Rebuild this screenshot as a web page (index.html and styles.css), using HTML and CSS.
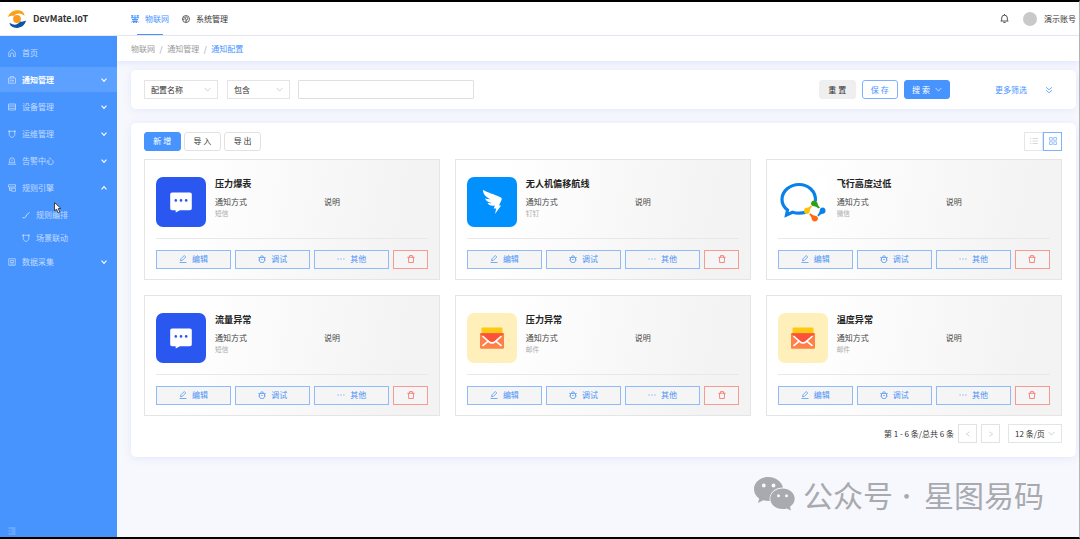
FILE: index.html
```html
<!DOCTYPE html>
<html lang="zh-CN">
<head>
    <meta charset="UTF-8">
    <meta name="viewport" content="width=device-width, initial-scale=1.0">
    <title>DevMate.IoT</title>
    <link rel="stylesheet" href="styles.css">
</head>
<body>
    <!-- icon sprite -->
    <svg class="sprite">
        <symbol id="i-home" viewBox="0 0 16 16"><path d="M1.500 15V6.500L8 1l6.500 5.500V15H11v-4a3 3 0 0 0-6 0v4z"/></symbol>
        <symbol id="i-notice" viewBox="0 0 16 16"><path d="M1 4h14v10.500H1zM5 4V1h6v3M4.500 7v4.500M8 7v4.500M8 9.200h4"/></symbol>
        <symbol id="i-device" viewBox="0 0 16 16"><path d="M1 2h14v12H1zM1 6h14M1 10.500h14"/></symbol>
        <symbol id="i-shield" viewBox="0 0 16 16"><path d="M2.500 2.500h11v7c0 3-3 4.500-5.500 5.500-2.500-1-5.500-2.500-5.500-5.500zM0 2.500h4M12 2.500h4M2.500 1v4M13.500 1v4"/></symbol>
        <symbol id="i-alarm" viewBox="0 0 16 16"><path d="M3 11.500V6.500a5 5 0 0 1 10 0v5M0 14.500h16M1.500 11.500h13M8 5v3M8 9v1"/></symbol>
        <symbol id="i-rule" viewBox="0 0 16 16"><path d="M.8 1.500h14.400v4.500H.8zM3 6v7h4M3 9.500h4M7.500 8.500h7.700v6H7.500z"/></symbol>
        <symbol id="i-flow" viewBox="0 0 16 16"><path stroke-width="2" d="M1 13.500h4c4 0 2-6 7-8M12 5.500L15 3"/></symbol>
        <symbol id="i-data" viewBox="0 0 16 16"><path d="M1.500 1.500h13v13h-13zM5 5h6v4H5zM4.500 12h7"/></symbol>
        <symbol id="i-fold" viewBox="0 0 16 16"><path d="M1 2h14M7 6h8M7 10h8M1 14h14M1 8h4"/></symbol>
        <symbol id="i-down" viewBox="0 0 16 16"><path d="M1.500 4.500L8 11.500l6.500-7"/></symbol>
        <symbol id="i-up" viewBox="0 0 16 16"><path d="M1.500 11.500L8 4.500l6.500 7"/></symbol>
        <symbol id="i-left" viewBox="0 0 16 16"><path d="M12.500 2L3.500 8l9 6"/></symbol>
        <symbol id="i-right" viewBox="0 0 16 16"><path d="M3.500 2l9 6-9 6"/></symbol>
        <symbol id="i-double" viewBox="0 0 16 16"><path d="M2 2.500L8 7.500l6-5M2 8.500l6 5 6-5"/></symbol>
        <symbol id="i-edit" viewBox="0 0 16 16"><path d="M3 11.500l1-4L10.500 1l3 3L7 10.500zM1 15h14"/></symbol>
        <symbol id="i-bug" viewBox="0 0 16 16"><path d="M3 5h10v5.500a5 5 0 0 1-10 0zM5 5a3 3.500 0 0 1 6 0M.5 4.500L3 6.500M15.500 4.500L13 6.500M.5 10H3M13 10h2.500M6.500 9h3"/></symbol>
        <symbol id="i-more" viewBox="0 0 16 16"><path d="M1 8h2.500M6.800 8h2.500M12.500 8H15"/></symbol>
        <symbol id="i-trash" viewBox="0 0 16 16"><path d="M.8 4.500h14.400M2.800 4.500l.5 10.500h9.400l.5-10.500M5 4.500V1.200h6v3.300"/></symbol>
        <symbol id="i-iot" viewBox="0 0 16 16"><path d="M8 0v16M0 1.500h5M11 1.500h5M0 5.500h16M2 9h12M.5 15L5 10.500M15.500 15L11 10.500M2.500 1.500v4M13.500 1.500v4M5 12v4M11 12v4M4 13h8"/></symbol>
        <symbol id="i-system" viewBox="0 0 16 16"><circle cx="8" cy="8" r="7"/><path d="M8 8L3 4M8 8v7M5 8.500H1M6 4.500c3-1.500 5.500 0 5.500 2.500S10 10 8 11"/></symbol>
        <symbol id="i-bell" viewBox="0 0 16 16"><path d="M3 12V7a5 5 0 0 1 10 0v5M1 12.500h14M6 15.300h4M8 0v2"/></symbol>
        <symbol id="i-list" viewBox="0 0 16 16"><path d="M0 3h2.500M5 3h11M0 8h2.500M5 8h11M0 13h2.500M5 13h11"/></symbol>
        <symbol id="i-grid" viewBox="0 0 16 16"><path d="M1 1h5.500v5.500H1zM9.500 1H15v5.500H9.500zM1 9.500h5.500V15H1zM9.500 9.500H15V15H9.500z"/></symbol>

        <symbol id="logo-sms" viewBox="0 0 50 50">
            <rect width="50" height="50" fill="#2957f0"/>
            <path fill="#fff" d="M16 15.500h18a1.800 1.800 0 0 1 1.800 1.800v14.200a1.800 1.800 0 0 1-1.800 1.800H24l-4.300 2.200v-2.200H16a1.800 1.800 0 0 1-1.800-1.800V17.300a1.800 1.800 0 0 1 1.800-1.800z"/>
            <g fill="#2957f0"><circle cx="19.800" cy="23.400" r="1.300"/><circle cx="25" cy="23.400" r="1.300"/><circle cx="30.200" cy="23.400" r="1.300"/></g>
        </symbol>
        <symbol id="logo-ding" viewBox="0 0 50 50">
            <rect width="50" height="50" fill="#0091ff"/>
            <path fill="#fff" d="M16 12.800C20 15.500 27.500 17.500 33.500 20.200c1.300.7 1.500 1.600 1 2.800l-2.500 5.500h2.100L28 37l1.200-5.500h-2.500l1.200-3c-3.400.9-6-.2-7.400-2.400 1.700.2 3.200.2 4.500-.1-3.500-.6-6-2-7-4.500 2.200.6 4 .8 5.500.7-4.500-1.700-7.500-4.900-7.500-9.400z"/>
        </symbol>
        <symbol id="logo-wecom" viewBox="0 0 50 50">
            <rect width="50" height="50" fill="#fff"/>
            <path fill="none" stroke="#0a80e8" stroke-width="3.200" d="M37.500 24C38 14 30 7.500 21 7.500S4 14 4 22.500c0 4.500 2 7.800 5.500 10.500L8.500 38l6-2.800c4 1.200 8.500 1.200 13 .2"/>
            <path fill="#2ba012" d="M33 26.500c.3-4 6-4 6.500-.3.200 2 1.300 3 2.500 4.300l-1.500 1c-1.800-1.700-3-2-4.500-2.200-2-.3-3-1.300-3-2.800z"/>
            <path fill="#0a80e8" d="M44.500 30.500c4 .3 4 6 .3 6.300-2 .2-3 1.300-4.300 2.700l-1.200-1.300c1.700-1.700 2.200-3 2.400-4.700.3-2 1.300-3 2.800-3z"/>
            <path fill="#ff6a10" d="M40 41.500c-.3 4-6 4-6.300.3-.2-2-1.200-3-2.500-4.300l1.300-1.200c1.700 1.700 3 2.200 4.700 2.400 1.800.3 2.800 1.300 2.800 2.800z"/>
            <path fill="#fcc20b" d="M29 37c-4-.3-4-6-.3-6.300 2-.2 3-1.200 4.300-2.500l1.200 1.300c-1.700 1.700-2.200 3-2.400 4.700-.3 1.800-1.300 2.800-2.800 2.800z"/>
        </symbol>
        <symbol id="logo-mail" viewBox="0 0 50 50">
            <rect width="50" height="50" fill="#fff0bb"/>
            <rect x="14.500" y="14.500" width="21" height="8" rx="1" fill="#fdc915"/>
            <rect x="13" y="20.300" width="24" height="15.400" rx="1" fill="#ff8048"/>
            <path fill="#fb523b" d="M13 20.300h24L26.500 30h-3z"/>
            <path fill="none" stroke="#fff" stroke-width="1.600" d="M15.500 23l6 5.300q3.500 3.200 7 0l6-5.300M15.500 32.800l5.500-4.500M34.500 32.800L29 28.300"/>
        </symbol>
    </svg>

    <div class="app">
        <header class="header">
            <div class="brand">
                <svg class="brand-logo" viewBox="0 0 36 36">
                    <path fill="#f9a11b" d="M0 14C3 4 13-1 24 1c5 1 9 5 9 11-6-6-15-7-21 0-4-1-8 0-12 2z"/>
                    <path fill="#0b56a4" d="M36 21c-2 11-13 17-24 14-5-1.500-9-5-9-10 7 6 16 6 21-2 4 1 8 0 12-2z"/>
                    <circle cx="18" cy="18" r="7.800" fill="#fb9a1c"/>
                </svg>
                <span>DevMate.IoT</span>
            </div>
            <nav class="top-nav">
                <a class="top-link active"><svg class="icon"><use href="#i-iot"/></svg>物联网</a>
                <a class="top-link"><svg class="icon"><use href="#i-system"/></svg>系统管理</a>
            </nav>
            <div class="account">
                <svg class="icon bell"><use href="#i-bell"/></svg>
                <span class="avatar"></span>
                <span>演示账号</span>
            </div>
        </header>

        <div class="main">
            <aside class="sidebar">
                <ul class="menu">
                    <li class="menu-item"><svg class="icon"><use href="#i-home"/></svg>首页</li>
                    <li class="menu-item active"><svg class="icon"><use href="#i-notice"/></svg>通知管理<svg class="icon arrow"><use href="#i-down"/></svg></li>
                    <li class="menu-item"><svg class="icon"><use href="#i-device"/></svg>设备管理<svg class="icon arrow"><use href="#i-down"/></svg></li>
                    <li class="menu-item"><svg class="icon"><use href="#i-shield"/></svg>运维管理<svg class="icon arrow"><use href="#i-down"/></svg></li>
                    <li class="menu-item"><svg class="icon"><use href="#i-alarm"/></svg>告警中心<svg class="icon arrow"><use href="#i-down"/></svg></li>
                    <li class="menu-item"><svg class="icon"><use href="#i-rule"/></svg>规则引擎<svg class="icon arrow"><use href="#i-up"/></svg></li>
                    <li class="menu-item sub"><svg class="icon"><use href="#i-flow"/></svg>规则编排</li>
                    <li class="menu-item sub"><svg class="icon"><use href="#i-shield"/></svg>场景联动</li>
                    <li class="menu-item"><svg class="icon"><use href="#i-data"/></svg>数据采集<svg class="icon arrow"><use href="#i-down"/></svg></li>
                </ul>
                <svg class="icon fold"><use href="#i-fold"/></svg>
            </aside>

            <div class="content">
                <div class="breadcrumb">
                    <span>物联网</span><i>/</i><span>通知管理</span><i>/</i><span class="current">通知配置</span>
                </div>

                <section class="panel filter">
                    <div class="select field">配置名称<svg class="icon"><use href="#i-down"/></svg></div>
                    <div class="select operator">包含<svg class="icon"><use href="#i-down"/></svg></div>
                    <input class="keyword" type="text">
                    <div class="filter-actions">
                        <button class="btn btn-reset">重 置</button>
                        <button class="btn btn-outline">保 存</button>
                        <button class="btn btn-primary btn-search">搜 索<svg class="icon"><use href="#i-down"/></svg></button>
                    </div>
                    <a class="more">更多筛选<svg class="icon"><use href="#i-double"/></svg></a>
                </section>

                <section class="panel list">
                    <div class="toolbar">
                        <button class="btn btn-primary">新 增</button>
                        <button class="btn">导 入</button>
                        <button class="btn">导 出</button>
                        <div class="view-switch">
                            <span><svg class="icon"><use href="#i-list"/></svg></span>
                            <span class="on"><svg class="icon"><use href="#i-grid"/></svg></span>
                        </div>
                    </div>
                    <div class="cards" id="cards"></div>
                    <div class="pagination">
                        <span class="total">第 1 - 6 条/总共 6 条</span>
                        <span class="page"><svg class="icon"><use href="#i-left"/></svg></span>
                        <span class="page"><svg class="icon"><use href="#i-right"/></svg></span>
                        <div class="select size">12 条/页<svg class="icon"><use href="#i-down"/></svg></div>
                    </div>
                </section>
            </div>
        </div>
    </div>

    <div class="watermark">
        <svg viewBox="0 0 41 34">
            <path d="M14.500 0C6.500 0 0 5.400 0 12.200c0 3.700 2 7 5.200 9.300L4 26l5.300-2.700c1.600.5 3.400.8 5.200.8h1.200C14.500 16 21 10.500 29 10.500 27.500 4.500 21.500 0 14.500 0z"/>
            <path d="M28.500 11.500c-6.800 0-12.200 4.600-12.200 10.300S21.700 32 28.500 32c1.500 0 3-.2 4.300-.6L37 33.500l-1-3.800c2.900-1.900 4.700-4.700 4.700-7.900 0-5.700-5.400-10.300-12.200-10.300z"/>
            <g fill="#f7f8fd"><circle cx="9.800" cy="8.500" r="1.900"/><circle cx="19.500" cy="8.500" r="1.900"/><circle cx="24.500" cy="18.800" r="1.500"/><circle cx="32.500" cy="18.800" r="1.500"/></g>
        </svg>
        <span class="wm-account">公众号</span><span class="wm-dot">·</span><span>星图易码</span>
    </div>

    <svg class="cursor" viewBox="0 0 16 24"><path d="M1 1v17l4-4 3 8 3.500-1.500L8.500 13H14z"/></svg>

    <script>
        const notices = [
            { name: '压力爆表', type: '短信', logo: 'sms' },
            { name: '无人机偏移航线', type: '钉钉', logo: 'ding' },
            { name: '飞行高度过低', type: '微信', logo: 'wecom' },
            { name: '流量异常', type: '短信', logo: 'sms' },
            { name: '压力异常', type: '邮件', logo: 'mail' },
            { name: '温度异常', type: '邮件', logo: 'mail' }
        ];

        document.getElementById('cards').innerHTML = notices.map(n => `
            <div class="card">
                <div class="card-body">
                    <svg class="card-logo"><use href="#logo-${n.logo}"/></svg>
                    <div class="card-info">
                        <h3>${n.name}</h3>
                        <div class="card-cols">
                            <div class="col"><p>通知方式</p><small>${n.type}</small></div>
                            <div class="col"><p>说明</p></div>
                        </div>
                    </div>
                </div>
                <div class="card-actions">
                    <button><svg class="icon"><use href="#i-edit"/></svg>编辑</button>
                    <button><svg class="icon"><use href="#i-bug"/></svg>调试</button>
                    <button><svg class="icon"><use href="#i-more"/></svg>其他</button>
                    <button class="danger"><svg class="icon"><use href="#i-trash"/></svg></button>
                </div>
            </div>`).join('');
    </script>
</body>
</html>
```

FILE: styles.css
```css
* {
    box-sizing: border-box;
}

body {
    margin: 0;
    height: 539px;
    overflow: hidden;
    font-family: "Noto Sans CJK SC", sans-serif;
    font-size: 8px;
    line-height: 12px;
    color: #444;
    background: #f7f8fd;
}

button, input {
    font: inherit;
    color: inherit;
}

.sprite {
    display: none;
}

.icon {
    width: 8px;
    height: 8px;
    flex: none;
    fill: none;
    stroke: currentColor;
    stroke-width: 1.5;
}

.app {
    display: flex;
    flex-direction: column;
    height: 539px;
    border-top: 2px solid #000;
    border-bottom: 2px solid #000;
    border-right: 1px solid #b5b6ba;
}

/* header */
.header {
    display: flex;
    align-items: center;
    height: 34px;
    flex: none;
    background: #fff;
    border-bottom: 1px solid #ebebee;
}

.brand {
    display: flex;
    align-items: center;
    gap: 7px;
    width: 131px;
    padding-left: 8px;
    font-size: 9px;
    font-weight: 700;
    color: #333;
}

.brand-logo {
    width: 18px;
    height: 18px;
}

.top-nav {
    display: flex;
    gap: 13px;
    height: 100%;
}

.top-link {
    display: flex;
    align-items: center;
    gap: 6px;
    position: relative;
    color: #333;
}

.top-link.active {
    color: #4794ff;
}

.top-link.active .icon {
    stroke-width: 2;
}

.top-link.active::after {
    content: "";
    position: absolute;
    left: 6px;
    right: 6px;
    bottom: 0;
    height: 1px;
    background: #4794ff;
}

.account {
    display: flex;
    align-items: center;
    margin-left: auto;
    padding-right: 3px;
    color: #333;
}

.bell {
    width: 9px;
    height: 9px;
    margin-right: 14px;
}

.avatar {
    width: 14px;
    height: 14px;
    margin-right: 7px;
    border-radius: 50%;
    background: #c9c9c9;
}

.main {
    display: flex;
    flex: 1;
    min-height: 0;
}

/* sidebar */
.sidebar {
    display: flex;
    flex-direction: column;
    width: 117px;
    padding-top: 4px;
    color: #c3dcff;
    background: #4794ff;
}

.menu {
    margin: 0;
    padding: 0;
    list-style: none;
}

.menu-item {
    display: flex;
    align-items: center;
    gap: 6px;
    height: 25px;
    margin-bottom: 2.2px;
    padding: 0 10px 0 8px;
}

.menu-item.active {
    color: #fff;
    font-weight: 700;
    background: #5ca1ff;
}

.menu-item.active .icon:first-child {
    color: #c3dcff;
}

.menu-item.sub {
    height: 23px;
    margin-bottom: 0;
    padding-left: 22px;
}

.menu-item .arrow {
    width: 6px;
    height: 6px;
    margin-left: auto;
    stroke-width: 3;
    color: #fff;
}

.fold {
    margin: auto 0 2px 8px;
    opacity: .7;
}

/* content */
.content {
    flex: 1;
    min-width: 0;
}

.breadcrumb {
    display: flex;
    align-items: center;
    height: 25px;
    padding-left: 14px;
    color: #999;
    background: #fff;
    box-shadow: 0 2px 6px rgba(90, 120, 230, .14);
}

.breadcrumb i {
    margin: 0 4.5px;
    font-style: normal;
}

.breadcrumb .current {
    color: #4794ff;
}

.panel {
    margin: 0 3px 0 14px;
    background: #fff;
    border-radius: 5px;
    box-shadow: 0 1px 9px rgba(90, 120, 230, .13);
}

.filter {
    display: flex;
    align-items: center;
    height: 39px;
    margin-top: 9px;
    padding: 0 23px 0 13px;
}

.select {
    display: flex;
    align-items: center;
    justify-content: space-between;
    height: 19px;
    padding: 0 6px;
    border: 1px solid #e4e4e6;
    color: #333;
    background: #fff;
}

.select .icon {
    width: 7px;
    height: 7px;
    color: #bbb;
}

.field {
    width: 74px;
    margin-right: 9px;
}

.operator {
    width: 63px;
    margin-right: 8px;
}

.keyword {
    width: 176px;
    height: 19px;
    border: 1px solid #e0e0e2;
    border-radius: 1px;
}

.filter-actions {
    display: flex;
    gap: 6px;
    margin-left: auto;
}

.btn {
    display: flex;
    align-items: center;
    justify-content: center;
    width: 36.5px;
    height: 19px;
    padding: 0;
    border: 1px solid #e2e2e4;
    border-radius: 3px;
    color: #333;
    background: #fff;
}

.btn-reset {
    border-color: #efefef;
    background: #efefef;
}

.btn-outline {
    border-color: #7eb2ff;
    color: #4794ff;
}

.btn-primary {
    border-color: #4794ff;
    color: #fff;
    background: #4794ff;
}

.btn-search {
    width: 46px;
    gap: 5px;
}

.btn-search .icon {
    width: 7px;
    height: 7px;
}

.more {
    display: flex;
    align-items: center;
    gap: 18px;
    margin-left: 45px;
    color: #4794ff;
}

.list {
    height: 334px;
    margin-top: 13.5px;
    padding: 9px 14px 0 13px;
}

.toolbar {
    display: flex;
    gap: 3.7px;
}

.view-switch {
    display: flex;
    margin-left: auto;
}

.view-switch span {
    display: flex;
    align-items: center;
    justify-content: center;
    width: 19px;
    height: 19px;
    border: 1px solid #e6e6e8;
    color: #ccc;
}

.view-switch .on {
    border-color: #7eb2ff;
    color: #7eb2ff;
}

/* notice cards */
.cards {
    display: grid;
    grid-template-columns: repeat(3, minmax(0, 1fr));
    gap: 15px 14.5px;
    margin-top: 8px;
}

.card {
    height: 121px;
    padding: 17px 11px 0;
    border: 1px solid #e5e5e6;
    background: linear-gradient(100deg, #fff 15%, #f3f3f3 85%);
}

.card-body {
    display: flex;
    height: 62px;
    border-bottom: 1px solid #e8e8e9;
}

.card-logo {
    width: 50px;
    height: 50px;
    flex: none;
    border-radius: 7px;
}

.card-info {
    flex: 1;
    min-width: 0;
    padding-left: 9px;
}

.card h3 {
    margin: 0 0 6px;
    font-size: 9.1px;
    font-weight: 700;
    line-height: 13px;
    color: #222;
}

.card-cols {
    display: flex;
}

.col {
    flex: 0 0 109px;
}

.card p {
    margin: 0;
    line-height: 11px;
}

.card small {
    display: block;
    font-size: 6.7px;
    line-height: 12px;
    color: #aaa;
}

.card-actions {
    display: flex;
    gap: 4px;
    margin-top: 11px;
}

.card-actions button {
    display: flex;
    align-items: center;
    justify-content: center;
    gap: 5px;
    flex: 1;
    height: 19px;
    padding: 0;
    border: 1px solid #8fbbfb;
    color: #4b92f7;
    background: #f5f5f6;
}

.card-actions .danger {
    flex: 0 0 35px;
    border-color: #f79a94;
    color: #f5645c;
}

/* pagination */
.pagination {
    display: flex;
    align-items: center;
    justify-content: flex-end;
    margin-top: 8.5px;
}

.total {
    margin-right: 4px;
    color: #333;
}

.page {
    display: flex;
    align-items: center;
    justify-content: center;
    width: 19px;
    height: 19px;
    margin-right: 4px;
    border: 1px solid #e2e2e4;
    color: #bbb;
}

.page .icon {
    width: 6px;
    height: 6px;
}

.size {
    width: 54px;
    margin-left: 4px;
}

/* overlays */
.watermark {
    position: absolute;
    left: 754px;
    top: 477px;
    display: flex;
    align-items: center;
    height: 34px;
    font-size: 30px;
    font-weight: 400;
    line-height: 34px;
    color: #a8aaaf;
}

.watermark svg {
    width: 41px;
    height: 34px;
    margin-right: 8px;
    fill: #a8aaaf;
}

.watermark .wm-dot {
    width: 31px;
    padding-right: 4px;
    font-size: 22px;
    text-align: center;
}

.cursor {
    position: absolute;
    left: 54px;
    top: 202px;
    width: 8px;
    height: 12px;
    fill: #fff;
    stroke: #444;
    stroke-width: 2;
}
```
